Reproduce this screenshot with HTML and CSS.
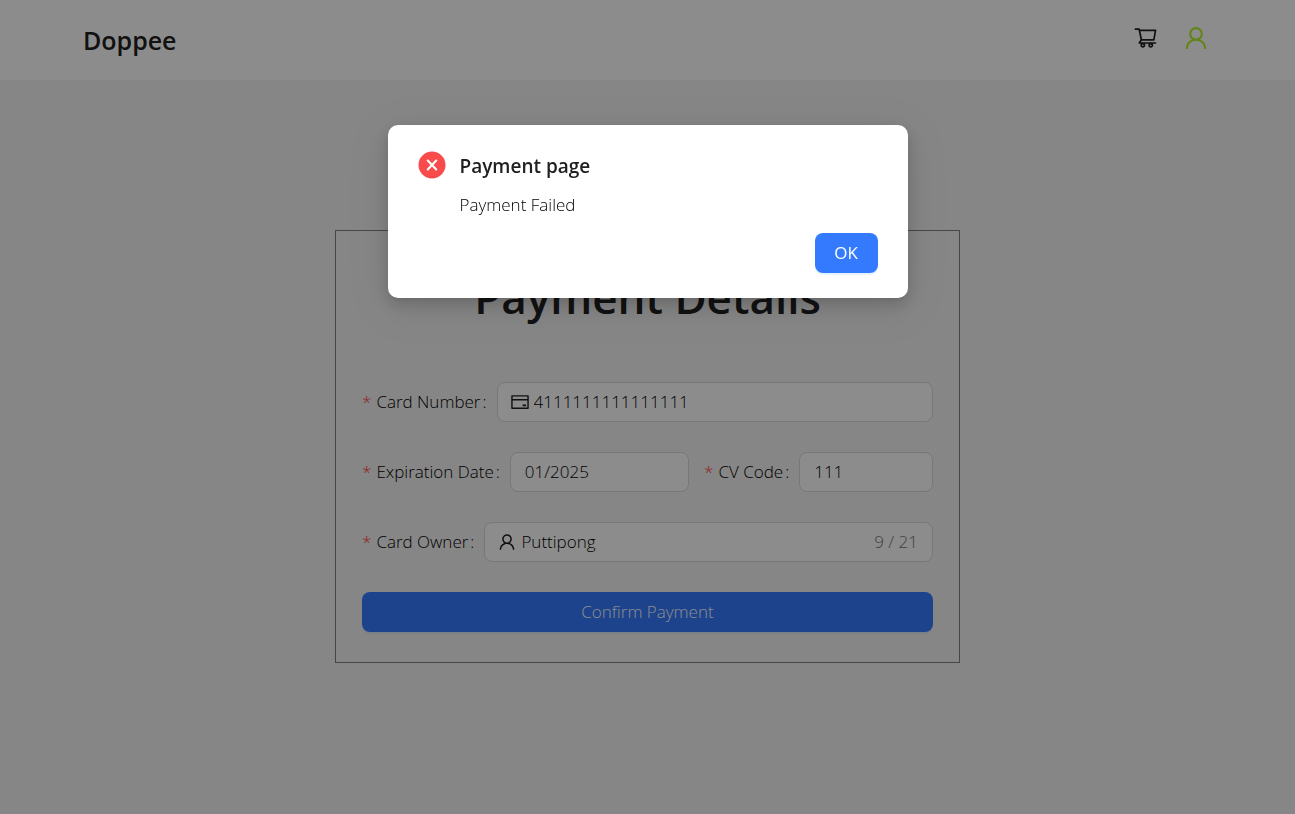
FILE: index.html
```html
<!DOCTYPE html>
<html lang="en">
<head>
<meta charset="utf-8">
<meta name="viewport" content="width=device-width, initial-scale=1">
<title>Doppee</title>
<link rel="stylesheet" href="styles.css">
</head>
<body>
<svg class="sprite" aria-hidden="true">
  <symbol id="icon-user" viewBox="0 0 1024 1024"><path d="M858.5 763.6a374 374 0 00-80.6-119.5 375.63 375.63 0 00-119.5-80.6c-.4-.2-.8-.3-1.2-.5C719.5 518 760 444.7 760 362c0-137-111-248-248-248S264 225 264 362c0 82.7 40.5 156 102.8 201.1-.4.2-.8.3-1.2.5-44.8 18.9-85 46-119.5 80.6a375.63 375.63 0 00-80.6 119.5A371.7 371.7 0 00136 901.8a8 8 0 008 8.2h60c4.4 0 7.9-3.5 8-7.8 2-77.2 33-149.5 87.8-204.3 56.7-56.7 132-87.9 212.2-87.9s155.5 31.2 212.2 87.9C779 752.7 810 825 812 902.2c.1 4.4 3.6 7.8 8 7.8h60a8 8 0 008-8.2c-1-47.8-10.9-94.3-29.5-138.2zM512 534c-45.9 0-89.1-17.9-121.6-50.4S340 407.9 340 362c0-45.9 17.9-89.1 50.4-121.6S466.1 190 512 190s89.1 17.9 121.6 50.4S684 316.1 684 362c0 45.9-17.9 89.1-50.4 121.6S557.9 534 512 534z"/></symbol>
</svg>
<header class="header">
  <div class="header-inner">
    <a class="brand" href="#">Doppee</a>
    <nav class="actions">
      <a href="#" aria-label="Cart"><svg class="icon icon-cart" viewBox="0 0 1024 1024"><path d="M922.9 701.9H327.4l29.9-60.9 496.8-.9c16.8 0 31.2-12 34.2-28.6l68.8-385.1c1.8-10.1-.9-20.5-7.5-28.4a34.99 34.99 0 00-26.6-12.5l-632-2.1-5.4-25.4c-3.4-16.2-18-28-34.6-28H96.5a35.3 35.3 0 100 70.6h125.9L246 312.8l58.1 281.3-74.8 122.1a34.96 34.96 0 00-3 36.8c6 11.9 18.1 19.4 31.5 19.4h62.8a102.43 102.43 0 00-20.6 61.7c0 56.6 46 102.6 102.6 102.6s102.6-46 102.6-102.6c0-22.3-7.4-44-20.6-61.7h161.1a102.43 102.43 0 00-20.6 61.7c0 56.6 46 102.6 102.6 102.6s102.6-46 102.6-102.6c0-22.3-7.4-44-20.6-61.7H923c19.4 0 35.3-15.8 35.3-35.3a35.42 35.42 0 00-35.4-35.2zM305.7 253l575.8 1.9-56.4 315.8-452.3.8L305.7 253zm96.9 612.7c-17.4 0-31.6-14.2-31.6-31.6 0-17.4 14.2-31.6 31.6-31.6s31.6 14.2 31.6 31.6a31.6 31.6 0 01-31.6 31.6zm325.1 0c-17.4 0-31.6-14.2-31.6-31.6 0-17.4 14.2-31.6 31.6-31.6s31.6 14.2 31.6 31.6a31.6 31.6 0 01-31.6 31.6z"/></svg></a>
      <a href="#" aria-label="Account"><svg class="icon icon-account"><use href="#icon-user"/></svg></a>
    </nav>
  </div>
</header>

<main class="page">
  <form class="payment">
    <h1 class="payment-title">Payment Details</h1>
    <div class="row">
      <div class="field">
        <label class="label" for="number">Card Number</label>
        <div class="control control-icon">
          <svg class="icon icon-field" viewBox="0 0 1024 1024"><path d="M928 160H96c-17.700 0-32 14.300-32 32v640c0 17.700 14.300 32 32 32h832c17.700 0 32-14.300 32-32V192c0-17.700-14.300-32-32-32zm-792 72h752v120H136V232zm752 560H136V440h752v352zm-237-64h165c4.400 0 8-3.600 8-8v-72c0-4.400-3.600-8-8-8H651c-4.400 0-8 3.600-8 8v72c0 4.400 3.600 8 8 8z"/></svg>
          <input class="input" id="number" type="text" value="4111111111111111">
        </div>
      </div>
    </div>
    <div class="row">
      <div class="field">
        <label class="label" for="expiry">Expiration Date</label>
        <div class="control"><input class="input" id="expiry" type="text" value="01/2025"></div>
      </div>
      <div class="field field-code">
        <label class="label" for="code">CV Code</label>
        <div class="control"><input class="input" id="code" type="text" value="111"></div>
      </div>
    </div>
    <div class="row">
      <div class="field">
        <label class="label" for="owner">Card Owner</label>
        <div class="control control-icon">
          <svg class="icon icon-field"><use href="#icon-user"/></svg>
          <input class="input" id="owner" type="text" value="Puttipong" maxlength="21">
          <span class="count">9 / 21</span>
        </div>
      </div>
    </div>
    <button class="button" type="submit">Confirm Payment</button>
  </form>
</main>

<div class="mask">
  <section class="dialog" role="alertdialog" aria-modal="true" aria-labelledby="dialog-title">
    <svg class="dialog-icon" viewBox="0 0 28 28"><circle cx="14" cy="14" r="13.500"/><path d="M9.800 9.600l8.400 8.800M18.200 9.600l-8.400 8.800"/></svg>
    <div class="dialog-body">
      <h2 class="dialog-title" id="dialog-title">Payment page</h2>
      <p class="dialog-text">Payment Failed</p>
      <button class="button button-ok" type="button">OK</button>
    </div>
  </section>
</div>
</body>
</html>
```
FILE: styles.css
```css
* { box-sizing: border-box; }

body {
  margin: 0;
  min-height: 100vh;
  background: #f5f5f5;
  color: #000;
  font-family: "Segoe UI", "Open Sans", "Noto Sans", sans-serif;
  font-size: 17px;
  font-weight: 300;
  line-height: 24px;
}

.sprite { position: absolute; width: 0; height: 0; }
.icon { display: block; flex: none; fill: currentColor; }

.header { height: 80px; padding-left: 62px; background: #fff; }
.header-inner {
  display: flex;
  align-items: center;
  justify-content: space-between;
  height: 81px;
  padding: 0 85px 0 21px;
  border-bottom: 1px solid #f0f0f0;
}
.brand {
  color: #202020;
  font-size: 25px;
  font-weight: 600;
  text-decoration: none;
}
.actions { display: flex; align-items: center; gap: 24px; padding-bottom: 5px; }
.actions a { color: #202020; }
.icon-cart { width: 25px; height: 25px; }
.icon-account { width: 28px; height: 28px; color: #b5f02a; }

.page { display: flex; justify-content: center; padding: 150px 20px 40px; }
.payment {
  display: flex;
  flex-direction: column;
  gap: 30px;
  width: 100%;
  max-width: 625px;
  padding: 30px 26px;
  border: 1px solid #808080;
}
.payment-title {
  margin: 6px 0 25px;
  color: #202020;
  font-size: 44px;
  font-weight: 600;
  line-height: 60px;
  text-align: center;
}
.row { display: flex; gap: 15px; }
.field { display: flex; align-items: center; flex: 1; min-width: 0; gap: 10px; }
.field-code { flex: 0 0 229px; }
.label { flex: none; }
.label::before {
  content: "*";
  margin-right: 5px;
  color: #ff4d4f;
  font-family: "Noto Sans", sans-serif;
}
.label::after { content: ":"; margin-left: 2px; }
.control {
  display: flex;
  align-items: center;
  flex: 1;
  min-width: 0;
  height: 40px;
  padding: 0 14px;
  gap: 4px;
  background: #fff;
  border: 1px solid #d9d9d9;
  border-radius: 8px;
}
.control-icon { padding-left: 12px; }
.input {
  flex: 1;
  width: 100%;
  min-width: 0;
  padding: 0;
  border: 0;
  outline: 0;
  background: transparent;
  color: inherit;
  font: inherit;
}
.icon-field { width: 20px; height: 20px; color: #202020; }
.count { color: #737373; }

.button {
  height: 40px;
  border: 0;
  border-radius: 8px;
  background: #347aff;
  box-shadow: 0 2px 0 rgba(5, 145, 255, 0.1);
  color: #fff;
  font: inherit;
}

.mask {
  position: fixed;
  inset: 0;
  display: flex;
  justify-content: center;
  align-items: flex-start;
  padding: 125px 20px 20px;
  background: rgba(0, 0, 0, 0.45);
}
.dialog {
  display: flex;
  gap: 14px;
  width: 100%;
  max-width: 520px;
  padding: 25px 30px;
  border-radius: 10px;
  background: #fff;
  box-shadow: 0 6px 16px rgba(0, 0, 0, 0.16), 0 3px 6px -4px rgba(0, 0, 0, 0.12), 0 9px 40px 12px rgba(0, 0, 0, 0.08);
}
.dialog-icon { flex: none; width: 28px; height: 30px; }
.dialog-icon circle { fill: #f94b4c; }
.dialog-icon path { fill: none; stroke: #fff; stroke-width: 2.2; stroke-linecap: round; }
.dialog-body { display: flex; flex: 1; flex-direction: column; }
.dialog-title { margin: 0 0 11px; color: #202020; font-size: 19px; font-weight: 600; line-height: 32px; }
.dialog-text { margin: 0 0 16px; }
.button-ok { align-self: flex-end; min-width: 63px; font-weight: 400; }
```
